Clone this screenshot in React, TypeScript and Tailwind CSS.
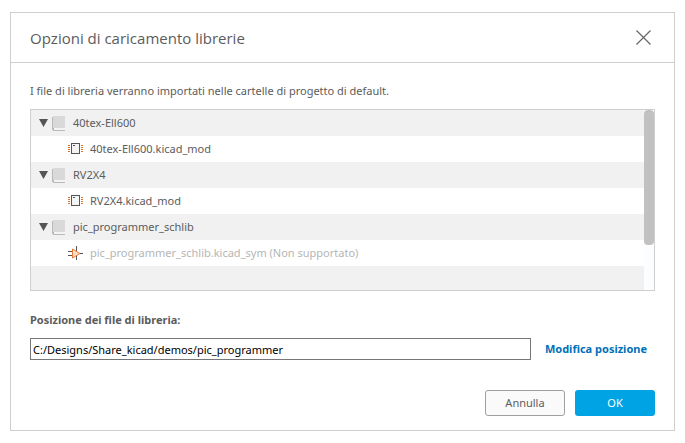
import { useState } from 'react';

const libraries = [
  { name: '40tex-Ell600', file: '40tex-Ell600.kicad_mod', supported: true },
  { name: 'RV2X4', file: 'RV2X4.kicad_mod', supported: true },
  { name: 'pic_programmer_schlib', file: 'pic_programmer_schlib.kicad_sym (Non supportato)', supported: false },
];

function BookIcon() {
  return (
    <svg width="13" height="15" viewBox="0 0 13 15" shapeRendering="crispEdges" aria-hidden="true">
      <path d="M1 0H13V12H0V1H1Z" fill="#d9d9d9" />
      <path d="M0 1H1V12H2V14H13V15H1V14H0Z" fill="#b9b9b9" />
      <path d="M2 12H13V14H2Z" fill="#f4f4f4" />
    </svg>
  );
}

function FootprintIcon() {
  return (
    <svg width="15" height="12" viewBox="0 0 15 12" shapeRendering="crispEdges" aria-hidden="true">
      <path d="M0 2H2V3H0ZM0 4H2V5H0ZM0 6H2V7H0ZM0 8H2V9H0ZM13 2H15V3H13ZM13 4H15V5H13ZM13 6H15V7H13ZM13 8H15V9H13Z" fill="#d9732b" />
      <rect x="3.5" y="0.5" width="8" height="10" fill="#f4f4f4" stroke="#555" />
      <path d="M5 2H7V3H5Z" fill="#555" />
    </svg>
  );
}

function SymbolIcon() {
  return (
    <svg width="15" height="14" viewBox="0 0 15 14" aria-hidden="true">
      <path d="M0 5.5H4M0 9.5H4M12 7.5H15M8.5 0V5M8.5 10V14" stroke="#555" />
      <path d="M4.5 3V12L12 7.5Z" fill="#fbdcc8" stroke="#ea7a35" />
    </svg>
  );
}

export default function App() {
  const [path, setPath] = useState('C:/Designs/Share_kicad/demos/pic_programmer');

  return (
    <div className="bg-white px-[10px] py-3 font-['Noto_Sans',sans-serif] text-[11px] text-[#5c5c5c]">
      <div role="dialog" aria-labelledby="title" className="border border-[#cfcfcf]">
        <header className="flex h-[50px] items-center justify-between border-b border-[#cfcfcf] px-[19px]">
          <h1 id="title" className="font-['Open_Sans',sans-serif] text-[15px] leading-6">Opzioni di caricamento librerie</h1>
          <button type="button" aria-label="Chiudi" className="mr-1">
            <svg width="15" height="15" viewBox="0 0 15 15" aria-hidden="true">
              <path d="M0.5 0.5L14.5 14.5M14.5 0.5L0.5 14.5" stroke="#666" strokeWidth="1.2" />
            </svg>
          </button>
        </header>

        <div className="px-[19px] pt-5 pb-[14px]">
          <p className="leading-4">I file di libreria verranno importati nelle cartelle di progetto di default.</p>

          <div className="mt-[10px] flex border border-[#cfcfcf]">
            <ul className="flex-1">
              {libraries.map((lib) => (
                <li key={lib.name}>
                  <div className="flex h-[26px] items-center bg-[#f1f1f1] pl-2">
                    <svg width="9" height="8" viewBox="0 0 9 8" aria-hidden="true">
                      <path d="M0 0H9L4.5 8Z" fill="#555" />
                    </svg>
                    <span className="ml-1"><BookIcon /></span>
                    <span className="ml-2 leading-4">{lib.name}</span>
                  </div>
                  <div className="flex h-[26px] items-center pl-[37px]">
                    {lib.supported ? <FootprintIcon /> : <SymbolIcon />}
                    <span className={lib.supported ? 'ml-[7px] leading-4' : 'ml-[7px] leading-4 text-[#b5b5b5]'}>{lib.file}</span>
                  </div>
                </li>
              ))}
              <li className="h-6 bg-[#f1f1f1]"></li>
            </ul>
            <div className="w-[10px] bg-[#fcfdff]">
              <div className="h-3/4 rounded-[4px] bg-[#c1c1c1]"></div>
            </div>
          </div>

          <label htmlFor="path" className="mt-[21px] block leading-4 font-bold">Posizione dei file di libreria:</label>
          <div className="mt-[10px] flex items-center">
            <input
              id="path"
              type="text"
              value={path}
              onChange={(e) => setPath(e.target.value)}
              className="h-[22px] min-w-0 flex-1 border border-[#777] px-[2px] text-black"
            />
            <a href="#" className="mr-2 ml-[14px] leading-4 font-bold text-[#0071b9]">Modifica posizione</a>
          </div>

          <div className="mt-[30px] flex justify-end gap-[10px]">
            <button type="button" className="h-[26px] w-20 rounded-[3px] border border-[#a0a0a0] bg-[#fafafa]">Annulla</button>
            <button type="button" className="h-[26px] w-20 rounded-[3px] bg-[#00a4e4] text-white">OK</button>
          </div>
        </div>
      </div>
    </div>
  );
}
